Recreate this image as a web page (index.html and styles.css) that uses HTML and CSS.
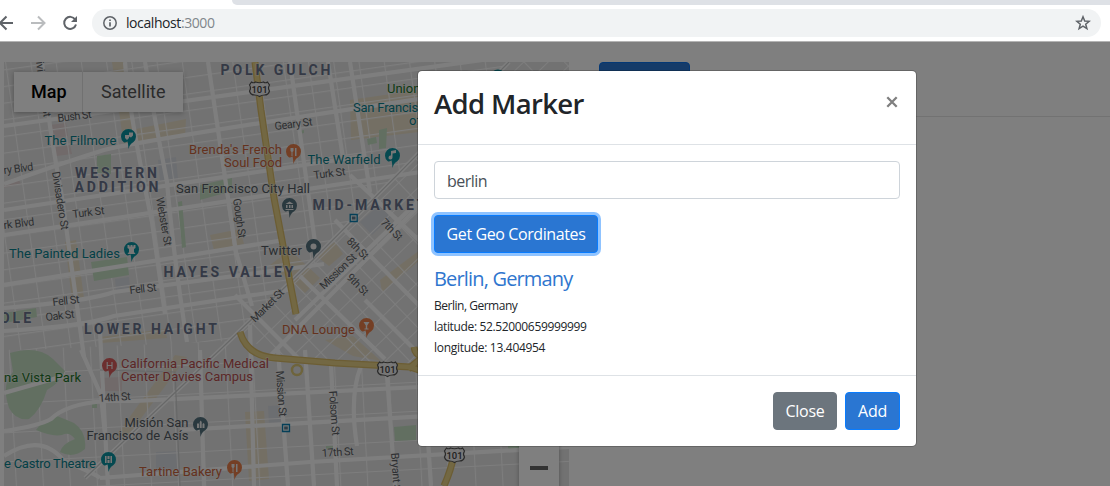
FILE: index.html
```html
<!DOCTYPE html>
<html lang="en">
<head>
<meta charset="utf-8">
<title>Add Marker</title>
<link rel="stylesheet" href="styles.css">
</head>
<body>
<header class="browser">
  <div class="tabs"><div class="tab-strip"></div></div>
  <div class="toolbar">
    <svg class="nav" viewBox="0 0 92 28">
      <g fill="none" stroke-width="2">
        <path stroke="#5f6368" d="M13 14H0M6.500 7.500L0 14l6.500 6.500"/>
        <path stroke="#babcbe" d="M31 14h13M38 7.500l6.500 6.500-6.500 6.500"/>
        <path stroke="#5f6368" d="M75.200 10.500A6 6 0 1 0 76 15.500"/>
      </g>
      <path fill="#5f6368" d="M77 7v6h-6z"/>
    </svg>
    <div class="address">
      <svg class="info" viewBox="0 0 14 14"><circle cx="7" cy="7" r="6.200" fill="none" stroke="#5f6368" stroke-width="1.500"/><path d="M7 6.200v4.300M7 3.400v1.600" stroke="#5f6368" stroke-width="1.700"/></svg>
      <span class="url">localhost<span class="port">:3000</span></span>
      <svg class="star" viewBox="0 0 16 16"><path d="M8 1.800l1.700 4.200 4.500.3-3.500 2.900 1.200 4.400L8 11.200l-3.900 2.400 1.200-4.400-3.500-2.900 4.500-.3z" fill="none" stroke="#5f6368" stroke-width="1.500"/></svg>
    </div>
  </div>
</header>
<main class="page">
  <div class="map">
    <svg class="tiles" viewBox="4 62 565 424">
      <defs>
        <pattern id="north" width="25" height="16.500" patternUnits="userSpaceOnUse" patternTransform="translate(6 69) rotate(-8)"><path d="M0 0H25M0 0V16.500" stroke="#fbfbfb" stroke-width="2.200"/></pattern>
        <pattern id="soma" width="29" height="17" patternUnits="userSpaceOnUse" patternTransform="translate(350 300) rotate(-44)"><path d="M0 0H29M0 0V17" stroke="#fbfbfb" stroke-width="2.200"/></pattern>
        <pattern id="south" width="27" height="29" patternUnits="userSpaceOnUse" patternTransform="translate(10 374) rotate(-3)"><path d="M0 0H27M0 0V29" stroke="#fbfbfb" stroke-width="2.200"/></pattern>
        <path id="pin" d="M0 12.500C-1-.500-1 8-5 5.500A7.500 7.500 0 1 1 5 5.500C1 8 1 10 0 12.500z"/>
        <g id="shield"><path d="M-8-7q2 1.500 4 0 4 1.500 8 0 2 1.500 4 0l2 3q-2 3 0 6-1 4-5 4-3 0-5 1.500Q-2 6-5 6q-4 0-5-4 2-3 0-6z" fill="#eee" stroke="#555" stroke-width="1.200"/><text y="4" text-anchor="middle" class="road-no">101</text></g>
        <g id="station"><path d="M-3.500-3.500h7v7h-7z" fill="#e8f0f2" stroke="#087fb0" stroke-width="1.300"/><path d="M-1.800-1.500h3.600v3h-3.600z" fill="#5c788c"/></g>
      </defs>
      <path fill="#e4e4e4" d="M4 62h565v424H4z"/>
      <g fill="#e9dfc8">
        <path d="M112 62l12-1 12 68 50-10-1 18-48 8-13 1zM65 242l11-2 8 58-12 2zM270 265l20-15 30 28-15 15zM315 255l20-13 8 12-14 12zM350 100l69-10v42l-68 8zM210 235l30-6 4 15-30 6zM100 337l65-8 2 9-66 5zM325 340l28-4 28 25-28-5zM245 412l19-1 5 68-20 2zM175 355l12 2-60 80-12 0zM380 280l40-30v10l-38 32z"/>
      </g>
      <g fill="#e3d4d4"><path d="M50 125l16-2 2 13-17 3zM55 147l15-2 2 9-16 2zM100 378l22-1v14h-22zM4 182l13-5 4 7-17 4z"/></g>
      <path fill="#d9dce2" d="M158 160l18-3 2 22-18 2zM115 279l14-2 1 11-14 2zM268 406l16-1 1 19-16 1zM156 452l22-1v20h-22zM360 222l20-18 12 12-20 19z"/>
      <path fill="url(#north)" d="M4 62h505L230 341 4 351z"/>
      <path fill="url(#soma)" d="M509 62h60v305H418l-120-6-60-25z"/>
      <path fill="url(#south)" d="M4 350l226-9 30 20 309 10v115H4z"/>
      <g fill="#c4dfc3">
        <path d="M91 262l36-5 2 18-35 6zM4 313l32-5 1 9-33 6zM97 156l14-2v20l-14-1zM200 185l32-7v13l-32 9zM394 427l22-2v15l-21 1zM178 202l4-1 4 46-4 1zM508 446h11v6h-11zM367 139l9-2 1 6-9 2zM299 131l5-1v3l-5 1zM92 401h5v7h-5zM326 446h8v3h-8z"/>
        <path d="M10 353q28-8 43 6l12 12q-5 12-18 19-6 20-18 29-13 2-20-11-8-24 4-36zM36 430q8-12 21-14 10 4 17 7 13 9 11 26-12 10-25 3 2-8 15-13-6-8-13-4-10 2-26-5zM379 130l8-2-1 20-7 1z"/>
      </g>
      <g class="roads">
        <path d="M4 126l565-78M4 184q55-20 100-34 58-14 465-73M4 235l430-65M4 308q86-7 110-16l210-28M4 331q82-5 110-15l180-27M4 285l280-45M4 210l360-54M42 62q6 60 20 135 9 65 22 160M125 62q4 50 27 160l13 92M145 62q10 60 22 120 6 70 20 160M208 62l28 190 16 54M290 62l25 180M350 62l20 130M328 62l15 96"/>
        <path d="M85 478L222 348 313 260 509 62M295 320l145-140M263 363L425 200M335 220l110 112M350 175l95 90M300 276l85 83M365 300l55 55M235 295l66 66M4 431q35-5 47-12 15-15 54-18h30l285-14M4 456q37-24 60 5 30 12 36 17M100 332l8 154M81 350l20 45 4 40M200 350l4 136M278 350l10 136M305 350l9 136M331 364l6 122M361 366q-12 30-4 80M387 375l8 111M428 440l3 46M100 478l210-16 259-15M4 393l60-17M180 430l389-22M250 325l4 161"/>
      </g>
      <path fill="none" stroke="#cfd0d0" stroke-width="1.200" d="M85 478L222 348 313 260 509 62M100 370l75 2 5 114"/>
      <g class="highway-edge"><path d="M255 62l6 48 13 88 22 116M240 332q7 24 35 26l60 5 75 4 35 12M408 369l15-12q-8-2-9-10M454 455q-3 15-10 31"/></g>
      <g class="highway"><path d="M255 62l6 48 13 88 22 116M240 332q7 24 35 26l60 5 75 4 35 12M408 369l15-12q-8-2-9-10M454 455q-3 15-10 31"/></g>
      <circle cx="297" cy="370" r="5" fill="none" stroke="#dcc878" stroke-width="2.500"/>
      <use href="#shield" x="259.500" y="89"/><use href="#shield" x="387.500" y="369"/><use href="#shield" x="454.500" y="455"/>
      <use href="#station" x="353.700" y="218"/><use href="#station" x="286" y="428"/>

      <g class="street">
        <text transform="translate(58 122) rotate(-7)" textLength="34">Bush St</text>
        <text transform="translate(275 130) rotate(-7)" textLength="38">Geary St</text>
        <text transform="translate(314 179) rotate(-7)" textLength="32">Turk St</text>
        <text transform="translate(73 218) rotate(-7)" textLength="32">Turk St</text>
        <text transform="translate(4 174) rotate(-7)" textLength="30">ry Blvd</text>
        <text transform="translate(4 229) rotate(-7)" textLength="31">rk Blvd</text>
        <text transform="translate(53 306) rotate(-7)" textLength="27">Fell St</text>
        <text transform="translate(130 294) rotate(-7)" textLength="27">Fell St</text>
        <text transform="translate(46 321) rotate(-7)" textLength="29">Oak St</text>
        <text transform="translate(99 402) rotate(-4)" textLength="32">14th St</text>
        <text transform="translate(322 457) rotate(-4)" textLength="32">17th St</text>
        <text transform="translate(35 55) rotate(82)" textLength="63">Divisadero St</text>
        <text transform="translate(52 172) rotate(81)" textLength="59">Divisadero St</text>
        <text transform="translate(156 198) rotate(80)" textLength="49">Webster St</text>
        <text transform="translate(233 199) rotate(82)" textLength="40">Gough St</text>
        <text transform="translate(276 371) rotate(86)" textLength="46">Mission St</text>
        <text transform="translate(329 391) rotate(86)" textLength="45">Folsom St</text>
        <text transform="translate(391 453) rotate(86)" textLength="42">Bryant St</text>
        <text transform="translate(255 323) rotate(-45)" textLength="42">Market St</text>
        <text transform="translate(324 290) rotate(-44)" textLength="46">Mission St</text>
        <text transform="translate(346 242) rotate(45)" textLength="26">8th St</text>
        <text transform="translate(346 278) rotate(45)" textLength="26">9th St</text>
        <text transform="translate(380 223) rotate(45)" textLength="26">7th St</text>
      </g>
      <g class="area">
        <text x="220.500" y="75" textLength="110">POLK GULCH</text>
        <text x="75" y="178" textLength="82">WESTERN</text>
        <text x="74.500" y="192" textLength="84">ADDITION</text>
        <text x="163.500" y="277" textLength="130">HAYES VALLEY</text>
        <text x="84" y="334" textLength="133">LOWER HAIGHT</text>
        <text x="312.500" y="210" textLength="113">MID-MARKET</text>
        <text x="0" y="323" textLength="31">OLE</text>
      </g>
      <g class="poi">
        <g class="teal">
          <text x="44.500" y="145" textLength="72">The Fillmore</text>
          <text x="307.500" y="164" textLength="73">The Warfield</text>
          <text x="353" y="112" textLength="79">San Francisco</text><text x="409" y="125">of</text>
          <text x="9" y="258" textLength="111">The Painted Ladies</text>
          <text x="4" y="468" textLength="92">e Castro Theatre</text>
          <g class="teal-pin"><use href="#pin" x="128.500" y="136.500"/><use href="#pin" x="392.500" y="155.500"/><use href="#pin" x="131.500" y="249.500"/><use href="#pin" x="108.500" y="459.500"/><use href="#pin" x="498" y="77"/></g>
        </g>
        <g class="orange">
          <text x="189" y="154" textLength="93">Brenda's French</text><text x="224" y="167" textLength="58">Soul Food</text>
          <text x="282" y="334" textLength="73">DNA Lounge</text><text x="139" y="476" textLength="83">Tartine Bakery</text>
          <g class="orange-pin"><use href="#pin" x="293.500" y="151.500"/><use href="#pin" x="366.500" y="325.500"/><use href="#pin" x="234.500" y="467.500"/></g>
        </g>
        <g class="slate">
          <text x="176" y="193" textLength="134">San Francisco City Hall</text><text x="261" y="255" textLength="41">Twitter</text>
          <text x="124.500" y="427" textLength="64">Misión San</text><text x="86.500" y="440" textLength="102">Francisco de Asís</text>
          <g class="slate-pin"><use href="#pin" x="289.500" y="205.500"/><use href="#pin" x="313.500" y="246.500"/><use href="#pin" x="200.500" y="424.500"/></g>
        </g>
        <g class="red">
          <text x="121" y="368" textLength="148">California Pacific Medical</text><text x="121" y="381" textLength="132">Center Davies Campus</text>
          <g class="red-pin"><use href="#pin" x="109.500" y="365.500"/></g>
        </g>
        <g class="green"><text x="387" y="93">Union</text><text x="4" y="382" textLength="77">na Vista Park</text></g>
      </g>
      <g fill="#eee">
        <path d="M125 135h4v3l-2 2-2-2zM129 132.500h4v3l-2 2-2-1z"/>
        <path d="M391 151l5-1v3l-3.500.6v4a2 2 0 1 1-1.500-2z"/>
        <path d="M127.500 245h2v1.500h1V245h2v1.500h1V245h2v3l-1.500 1v3l1.500 2h-8l1.500-2v-3l-1.500-1z"/>
        <path d="M105 456h7v7h-7z"/>
        <path d="M285.500 204l4-2.500 4 2.500zM286 205h1.500v3H286zM289 205h1.500v3H289zM291.500 205h1.500v3h-1.500zM285.500 209h8v1h-8z"/>
        <circle cx="313.500" cy="246.500" r="3"/>
        <path d="M197 424l1-1 1 1v4h-2zM199.700 422l1-1.500 1 1.500v6h-2zM202.500 424l1-1 1 1v4h-2z"/>
        <path d="M363.500 322h6l-2.300 3.500v3h1.300v1h-4v-1h1.300v-3z"/>
        <path d="M290.500 148h3v3l-1 1v4h-1v-4l-1-1zM295 148h1.500v8H295zM231.500 464h3v3l-1 1v4h-1v-4l-1-1zM236 464h1.500v8H236z"/>
      </g>
      <path d="M107.200 362v7M112 362v7M107.200 365.500h5" stroke="#eee" stroke-width="1.100"/>
      <path d="M107 456v7M110 456v7M107 459.500h3" stroke="#08808d" stroke-width=".8"/>
    </svg>
    <div class="map-type"><span class="type active">Map</span><span class="type">Satellite</span></div>
    <div class="zoom-control"><span class="minus"></span></div>
  </div>
  <section class="side"><div class="side-head"><div class="side-button"></div></div></section>
  <div class="backdrop">
    <div class="modal">
      <div class="modal-header"><h2 class="title">Add Marker</h2>
        <svg class="close" viewBox="0 0 12 12"><path d="M1.300 1.300l9.400 9.400M10.700 1.300l-9.400 9.400" stroke="#7f7f7f" stroke-width="2.300"/></svg>
      </div>
      <div class="modal-body">
        <div class="field">berlin</div>
        <button class="btn primary focus">Get Geo Cordinates</button>
        <h5 class="place">Berlin, Germany</h5>
        <p class="line first">Berlin, Germany</p>
        <p class="line">latitude: 52.52000659999999</p>
        <p class="line last">longitude: 13.404954</p>
      </div>
      <div class="modal-footer"><button class="btn secondary">Close</button><button class="btn primary add">Add</button></div>
    </div>
  </div>
</main>
</body>
</html>
```
FILE: styles.css
```css
* { box-sizing: border-box; }
body { margin: 0; height: 486px; overflow: hidden; display: flex; flex-direction: column; background: #fff; font-family: "Open Sans", sans-serif; color: #212529; }
svg { display: block; flex: none; }
.browser { height: 42px; border-bottom: 1px solid #b4b4b4; display: flex; flex-direction: column; flex: none; }
.tabs { height: 9px; padding-left: 232px; }
.tab-strip { height: 5px; background: #dee1e6; border-bottom-left-radius: 6px; }
.toolbar { display: flex; height: 28px; }
.nav { width: 92px; height: 28px; }
.address { width: 1009px; height: 28px; border-radius: 14px; background: #f1f3f4; display: flex; align-items: center; padding: 0 10px 0 11px; }
.info { width: 14px; height: 14px; margin-right: 9px; }
.url { font-size: 14px; line-height: 20px; letter-spacing: -0.42px; flex: 1; }
.port { color: #80868b; }
.star { width: 16px; height: 16px; }

.page { position: relative; flex: 1; display: flex; padding: 20px 0 0 4px; gap: 30px; }
.map { position: relative; width: 565px; height: 424px; overflow: hidden; font-family: Roboto, sans-serif; }
.tiles { width: 565px; height: 424px; }
.tiles text { paint-order: stroke; stroke: rgba(240,240,240,.5); stroke-width: 1.5px; }
.roads { fill: none; stroke: #fdfdfd; stroke-width: 4.2; }
.highway-edge { fill: none; stroke: #d8bb68; stroke-width: 7; }
.highway { fill: none; stroke: #e6d086; stroke-width: 4.5; }
.street { font-size: 11px; fill: #5c5f64; }
.area { font-size: 14px; font-weight: 700; fill: #68738c; }
.poi { font-size: 13px; }
.tiles .road-no { font-size: 9.5px; font-weight: 500; fill: #444; stroke: none; }
.teal { fill: #08808d; }
.teal-pin { fill: #0b93a1; }
.orange { fill: #c9643c; }
.orange-pin { fill: #e87f4a; }
.slate { fill: #535b63; }
.slate-pin { fill: #54727f; }
.red { fill: #b84f4f; }
.red-pin { fill: #d85c5c; }
.green { fill: #1d7428; }
.map-type { position: absolute; left: 10px; top: 10px; width: 169px; height: 40px; display: flex; background: #fff; box-shadow: 0 1px 5px rgba(0,0,0,.3); font-size: 18px; line-height: 40px; color: #565656; }
.type { padding-left: 18px; flex: 1; }
.type.active { flex: 0 0 69px; border-right: 1px solid #e3e3e3; padding-left: 17px; color: #000; font-weight: 500; }
.zoom-control { position: absolute; left: 515px; top: 344px; width: 40px; height: 81px; background: #fff; box-shadow: 0 1px 4px rgba(0,0,0,.3); display: flex; justify-content: center; padding-top: 60px; }
.minus { width: 18px; height: 4px; background: #666; }
.side { flex: 1; }
.side-head { height: 55px; border-bottom: 1px solid #e5e5e5; }
.side-button { width: 91px; height: 38px; border-radius: 4px; border: 1px solid #0870ea; background: #2a76d2; }

.backdrop { position: absolute; inset: 0; background: rgba(0,0,0,.5); padding: 28px 0 0 417px; }
.modal { width: 500px; height: 377px; background: #fff; background-clip: padding-box; border: 1px solid rgba(0,0,0,.2); border-radius: 5px; display: flex; flex-direction: column; }
.modal-header { height: 74px; border-bottom: 1px solid #dee2e6; display: flex; justify-content: space-between; padding: 16px 18px 0 16px; }
.title { margin: 0; font-size: 27.5px; line-height: 34px; font-weight: 600; letter-spacing: -0.65px; }
.close { width: 12px; height: 12px; margin-top: 9px; }
.modal-body { height: 231px; border-bottom: 1px solid #dee2e6; padding: 16px; display: flex; flex-direction: column; align-items: flex-start; }
.field { width: 466px; height: 38px; border: 1px solid #ced4da; border-radius: 4px; padding: 0 12px; font-size: 16px; line-height: 38px; color: #495057; letter-spacing: -.55px; }
.btn { height: 38px; border-radius: 4px; border: 1px solid; padding: 0; font: 16px/36px "Open Sans", sans-serif; color: #fff; white-space: nowrap; }
.primary { background: #2a76d2; border-color: #087cff; }
.focus { margin-top: 16px; width: 164px; box-shadow: 0 0 0 3px #8fc3ff; letter-spacing: -.4px; }
.place { margin: 14px 0 5px; font-size: 20px; line-height: 24px; font-weight: 400; color: #2f76ce; letter-spacing: -.83px; }
.line { margin: 0; height: 22px; font-size: 12px; line-height: 20px; letter-spacing: -.35px; }
.line.first { letter-spacing: -.48px; }
.line.last { letter-spacing: -.3px; }
.modal-footer { flex: 1; display: flex; justify-content: flex-end; gap: 8px; padding: 16px; }
.secondary { width: 64px; background: #6c757d; border-color: #6c757d; letter-spacing: -.3px; }
.add { width: 55px; letter-spacing: -.3px; }
```
